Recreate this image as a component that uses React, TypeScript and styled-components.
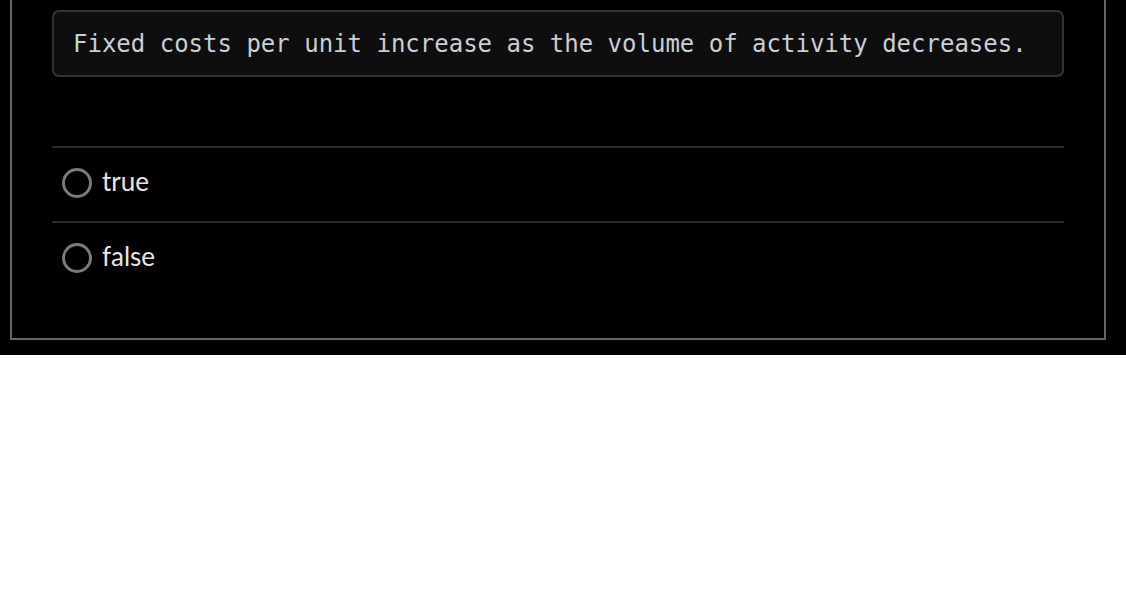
import React from "react";
import styled, { createGlobalStyle } from "styled-components";

const Global = createGlobalStyle`
  html, body { margin: 0; padding: 0; background: #ffffff; }
  * { box-sizing: border-box; }
`;

const Page = styled.div`
  background: #000000;
  padding: 0 20px 15px 10px;
`;

const Frame = styled.div`
  border: 2px solid #666666;
  border-top: none;
  padding: 10px 40px 42px 40px;
`;

const Statement = styled.div`
  background: #0e0e0e;
  border: 2px solid #333333;
  border-radius: 7px;
  padding: 18px 19px 17px 19px;
  font-family: "DejaVu Sans Mono", "Liberation Mono", monospace;
  font-size: 24px;
  line-height: 28px;
  color: #c8d0d6;
  white-space: nowrap;
`;

const Options = styled.div`
  margin-top: 69px;
  display: flex;
  flex-direction: column;
`;

const Option = styled.label`
  display: flex;
  align-items: center;
  gap: 10px;
  height: 75px;
  padding: 0 10px 4px 10px;
  border-top: 2px solid #2a2a2a;
  font-family: "Lato", "Open Sans", sans-serif;
  font-size: 26px;
  color: #e6e6e6;
  cursor: pointer;
`;

const Radio = styled.span`
  width: 30px;
  height: 30px;
  border-radius: 50%;
  border: 3px solid #7a7a7a;
  flex: none;
`;

const OptionText = styled.span`
  line-height: 1;
  margin-top: -3px;
`;

export default function App() {
  return (
    <>
      <Global />
      <Page>
        <Frame>
          <Statement>
            Fixed costs per unit increase as the volume of activity decreases.
          </Statement>
          <Options>
            {["true", "false"].map((o) => (
              <Option key={o}>
                <Radio />
                <OptionText>{o}</OptionText>
              </Option>
            ))}
          </Options>
        </Frame>
      </Page>
    </>
  );
}
